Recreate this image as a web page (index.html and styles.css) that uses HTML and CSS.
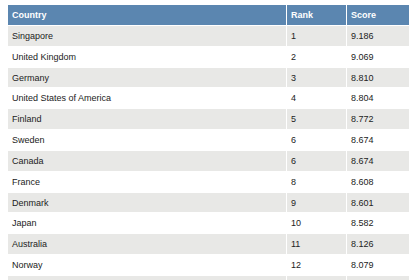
FILE: index.html
```html
<!DOCTYPE html>
<html>
<head>
<meta charset="utf-8">
<link rel="stylesheet" href="styles.css">
</head>
<body>
<div class="wrap">
<table class="rank-table">
  <colgroup>
    <col class="c-country">
    <col class="c-rank">
    <col class="c-score">
  </colgroup>
  <thead>
    <tr><th>Country</th><th>Rank</th><th>Score</th></tr>
  </thead>
  <tbody>
    <tr><td>Singapore</td><td>1</td><td>9.186</td></tr>
    <tr><td>United Kingdom</td><td>2</td><td>9.069</td></tr>
    <tr><td>Germany</td><td>3</td><td>8.810</td></tr>
    <tr><td>United States of America</td><td>4</td><td>8.804</td></tr>
    <tr><td>Finland</td><td>5</td><td>8.772</td></tr>
    <tr><td>Sweden</td><td>6</td><td>8.674</td></tr>
    <tr><td>Canada</td><td>6</td><td>8.674</td></tr>
    <tr><td>France</td><td>8</td><td>8.608</td></tr>
    <tr><td>Denmark</td><td>9</td><td>8.601</td></tr>
    <tr><td>Japan</td><td>10</td><td>8.582</td></tr>
    <tr><td>Australia</td><td>11</td><td>8.126</td></tr>
    <tr><td>Norway</td><td>12</td><td>8.079</td></tr>
    <tr class="peek"><td></td><td></td><td></td></tr>
  </tbody>
</table>
</div>
</body>
</html>
```
FILE: styles.css
```css
html, body {
  margin: 0;
  padding: 0;
  background: #ffffff;
  overflow: hidden;
}
.wrap {
  padding: 4px 0 0 7px;
}
.rank-table {
  width: 403px;
  table-layout: fixed;
  border-collapse: separate;
  border-spacing: 1px;
  font-family: "Liberation Sans", Arial, Helvetica, sans-serif;
  font-size: 9px;
  color: #222222;
}
.c-country { width: 278px; }
.c-rank { width: 59px; }
.c-score { width: 62px; }
.rank-table th,
.rank-table td {
  box-sizing: border-box;
  padding: 0 4px;
  text-align: left;
  white-space: nowrap;
  overflow: hidden;
}
.rank-table th {
  height: 20px;
  background: #5b86b0;
  color: #ffffff;
  font-weight: bold;
}
.rank-table td {
  height: 19.83px;
}
.rank-table tbody tr:nth-child(odd) td {
  background: #e8e8e6;
}
```
